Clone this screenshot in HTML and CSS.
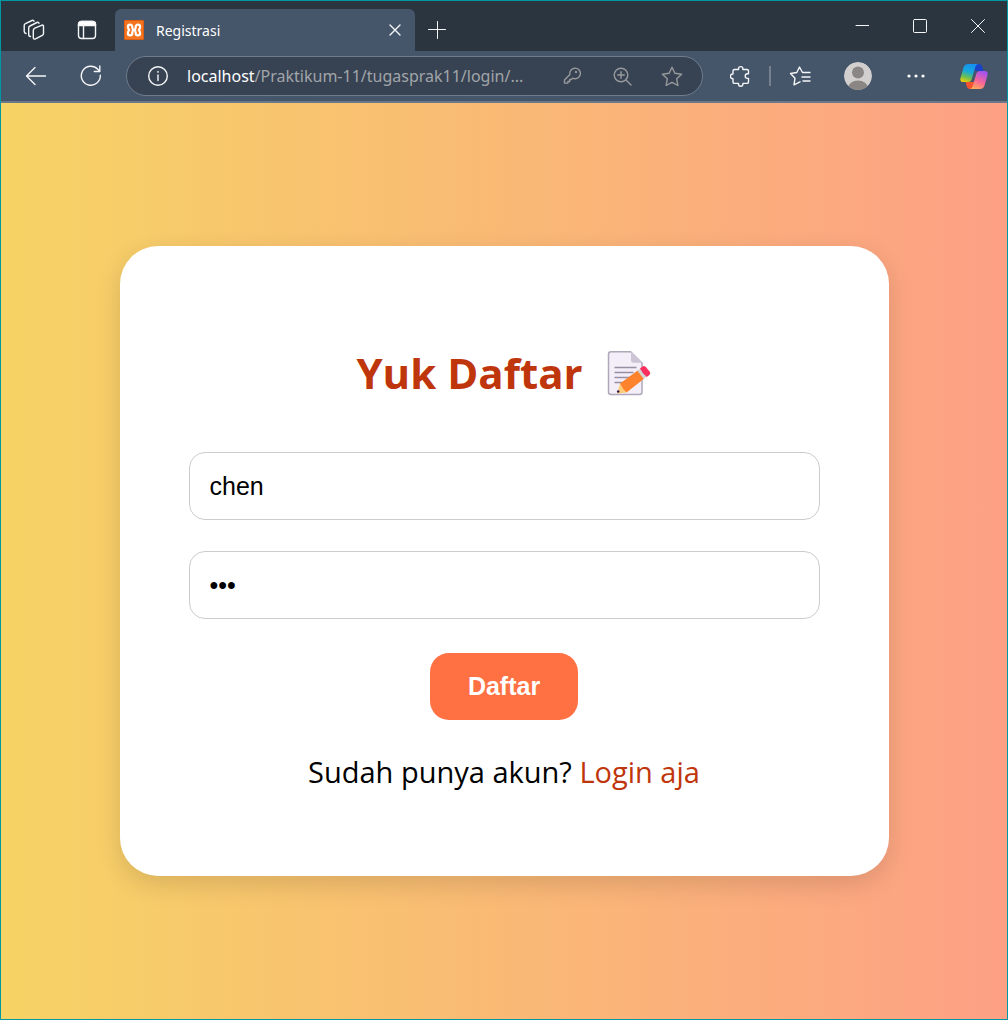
FILE: index.html
```html
<!DOCTYPE html>
<html lang="id">
<head>
<meta charset="utf-8">
<meta name="viewport" content="width=device-width, initial-scale=1">
<title>Registrasi</title>
<link rel="stylesheet" href="styles.css">
</head>
<body>
<div class="window">
  <header class="titlebar">
    <div class="tabs">
      <button class="tab-tool" aria-label="Workspaces">
        <svg width="22" height="22" viewBox="0 0 22 22" class="line"><path d="M11.800 9.200 18.500 6.300Q20.500 5.500 20.500 7.500v7q0 1.300-1.200 1.800l-6.800 3.500Q10.300 20.800 10.300 18.500V11.500Q10.300 9.900 11.800 9.200z"/><path d="M7.500 17.500Q5.700 17.500 5.700 15.500V8.800q0-1.300 1.200-1.800L14 3.500q1.500-.6 2 .8"/><path d="M3 14.500Q1.200 14 1.200 12.500V6.500q0-1.300 1.200-1.800L9 1.500q1.500-.6 2 .8"/></svg>
      </button>
      <button class="tab-tool" aria-label="Tab actions">
        <svg width="20" height="20" viewBox="0 0 20 20" class="line"><rect x="1.500" y="1.500" width="17" height="17" rx="3"/><path d="M1.500 5.500V4.500a3 3 0 0 1 3-3h11a3 3 0 0 1 3 3v1z" fill="#fff"/><path d="M6.500 6v12.500"/></svg>
      </button>
      <div class="tab">
        <svg class="favicon" width="20" height="20" viewBox="0 0 20 20"><rect width="20" height="20" rx="1" fill="#dd5f14"/><rect x="1" y="1" width="18" height="18" fill="#f5741f"/><path d="M8.300 7.500V6.800a2.200 2.200 0 0 0-4.400 0q0 1.700 1.300 3.200-1.300 1.500-1.300 3.200a2.200 2.200 0 0 0 4.400 0v-.5Q8.300 10.500 10 10t1.700-2.500V6.800a2.200 2.200 0 0 1 4.400 0q0 1.700-1.300 3.200 1.300 1.500 1.300 3.200a2.200 2.200 0 0 1-4.400 0v-.5Q11.700 10.500 10 10T8.300 7.500" fill="none" stroke="#fff" stroke-width="2.200" stroke-linecap="round" stroke-linejoin="round"/></svg>
        <span class="tab-title">Registrasi</span>
        <button class="tab-close" aria-label="Close tab">
          <svg width="12" height="12" viewBox="0 0 12 12" class="line"><path d="m1 1 10 10M11 1 1 11"/></svg>
        </button>
      </div>
      <button class="new-tab" aria-label="New tab">
        <svg width="18" height="18" viewBox="0 0 18 18" class="line thin"><path d="M9.500 .5v17M.5 8.500h17"/></svg>
      </button>
    </div>
    <div class="controls">
      <button class="control" aria-label="Minimize"><svg width="14" height="14" viewBox="0 0 14 14" class="line thin"><path d="M1 6.500h13"/></svg></button>
      <button class="control" aria-label="Maximize"><svg width="14" height="14" viewBox="0 0 14 14" class="line thin"><rect x=".5" y=".5" width="13" height="13" rx="1"/></svg></button>
      <button class="control" aria-label="Close"><svg width="14" height="14" viewBox="0 0 14 14" class="line thin"><path d="m.5.5 13 13M13.500.5l-13 13"/></svg></button>
    </div>
  </header>

  <nav class="toolbar" aria-label="Browser">
    <button class="nav-button" aria-label="Back"><svg width="22" height="20" viewBox="0 0 22 20" class="line"><path d="M20.500 10H1.500M10 1.500 1.500 10l8.500 8.500"/></svg></button>
    <button class="nav-button" aria-label="Refresh"><svg width="22" height="22" viewBox="0 0 22 22" class="line"><path d="M20.300 10.200A9.500 9.500 0 1 1 17.800 4.300L19.800 6.500M19.800 1v5.500h-5.500"/></svg></button>
    <div class="address">
      <button class="address-icon" aria-label="Site information"><svg width="20" height="20" viewBox="0 0 20 20" class="line"><circle cx="10" cy="10" r="9.300"/><path d="M10 9v5.500M10 5.500v.8"/></svg></button>
      <div class="url"><span class="host">localhost</span>/Praktikum-11/tugasprak11/login/...</div>
      <button class="address-icon" aria-label="Passwords"><svg width="18" height="18" viewBox="0 0 18 18" class="line muted"><path d="M11.500 1.200a5.300 5.300 0 1 1-1.800 10L8.300 12.500H6.700v2H4.900v1.600H1.500v-3.200L6.900 7.600A5.300 5.300 0 0 1 11.500 1.200z"/><circle cx="13" cy="5" r=".5"/></svg></button>
      <button class="address-icon" aria-label="Zoom"><svg width="19" height="19" viewBox="0 0 19 19" class="line muted"><circle cx="8" cy="8" r="6.800"/><path d="m13 13 5 5M8 4.700v6.600M4.700 8h6.600"/></svg></button>
      <button class="address-icon" aria-label="Add to favorites"><svg width="22" height="21" viewBox="0 0 22 21" class="line muted"><path d="m11 1.200 2.900 6.100 6.700.9-4.900 4.600 1.200 6.700L11 16.300l-5.900 3.200 1.200-6.700-4.900-4.600 6.700-.9z"/></svg></button>
    </div>
    <button class="tool" aria-label="Extensions"><svg width="20" height="22" viewBox="0 0 20 22" class="line"><path d="M4.500 4.500h4V3.800a2.200 2.200 0 0 1 4.400 0v.7h4q1.600 0 1.600 1.500v2.800h-1a2.300 2.300 0 0 0 0 4.600h1v3.500q0 1.500-1.600 1.500h-4v.700a2.200 2.200 0 0 1-4.400 0v-.7h-4q-1.500 0-1.500-1.500v-3.300h-.3a2.300 2.300 0 0 1 0-4.600H3V6q0-1.500 1.500-1.500z"/></svg></button>
    <span class="divider"></span>
    <button class="tool" aria-label="Favorites"><svg width="22" height="20" viewBox="0 0 22 20" class="line"><path d="M13.500 6.500 10.500 1 7.800 6.500 1.500 7.500l4.500 4.700L5 18.800l6-3M13.500 6.500H21M13 11h8M14 15h7"/></svg></button>
    <button class="tool" aria-label="Profile"><svg width="28" height="28" viewBox="0 0 28 28"><defs><clipPath id="face"><circle cx="14" cy="14" r="14"/></clipPath></defs><g clip-path="url(#face)"><circle cx="14" cy="14" r="14" fill="#d2d0ce"/><circle cx="14" cy="10.500" r="6" fill="#8a8683"/><ellipse cx="14" cy="26" rx="10" ry="7.500" fill="#8a8683"/></g></svg></button>
    <button class="tool" aria-label="Settings and more"><svg width="18" height="4" viewBox="0 0 18 4" fill="#fff"><circle cx="2" cy="2" r="1.600"/><circle cx="9" cy="2" r="1.600"/><circle cx="16" cy="2" r="1.600"/></svg></button>
    <button class="tool" aria-label="Copilot">
      <svg width="28" height="27" viewBox="0 0 28 27">
        <defs>
          <linearGradient id="cool" x1=".5" y1="0" x2=".2" y2="1"><stop offset="0" stop-color="#1591f0"/><stop offset=".4" stop-color="#17a9dc"/><stop offset=".7" stop-color="#65bf58"/><stop offset="1" stop-color="#f4cf05"/></linearGradient>
          <linearGradient id="warm" x1=".7" y1="0" x2=".3" y2="1"><stop offset="0" stop-color="#a052f4"/><stop offset=".55" stop-color="#f5659b"/><stop offset="1" stop-color="#ffa85b"/></linearGradient>
        </defs>
        <path d="M15 1h4q2.500 0 3.200 2.500L23.500 8H15z" fill="#1b43c8"/>
        <path d="M13 26H9.500Q7.500 26 6.800 23.500L5.500 19H15z" fill="#f4522e"/>
        <path d="M8 1h10q-2 .5-2.700 3L11.800 16q-1 3-3.800 3H3.500Q-.5 19 .5 15L3.500 4.500Q4.600 1 8 1z" fill="url(#cool)"/>
        <path d="M20 26H10q2-.5 2.700-3l3.500-12q1-3 3.800-3h4.500q4 0 3 4l-3 10.500Q23.400 26 20 26z" fill="url(#warm)"/>
      </svg>
    </button>
  </nav>

  <main class="page">
    <section class="card">
      <h1 class="heading">Yuk Daftar
        <svg class="memo" width="46" height="46" viewBox="0 0 46 46" role="img" aria-label="Memo">
          <path d="M5 1.700h19.500L36 13v29q0 2.500-2.500 2.500H5Q2.500 44.500 2.500 42V4.200Q2.500 1.700 5 1.700z" fill="#f3eef8" stroke="#afa8ba" stroke-width="1.500"/>
          <path d="M25 1.500 36.300 12.800H27.500Q25 12.800 25 10.500z" fill="#cdc4d6"/>
          <path d="M8.500 17.500h22M8.500 22.500h19M8.500 27.500h16M8.500 32.500h9" stroke="#998ea4" stroke-width="1.500"/>
          <path d="m14 33.500 6.500 9-8 1q-1.500 0-1-1.500z" fill="#ffce7c"/>
          <circle cx="12.200" cy="41.500" r="1.300" fill="#321b41"/>
          <path d="M14 33.500 32 20.200l6 8.600L20.500 42.500q-3.500-3-6.500-9z" fill="#ff822d"/>
          <path d="m31.500 20.700 3.500-2.700 6 8.500-3.200 2.500z" fill="#d3d3d3"/>
          <path d="m34 18.500 2.200-1.800q2-1.300 3.600.3l4 4.700q1.100 1.800-.4 3.200L40.700 27q-4-3-6.700-8.500z" fill="#f92f60"/>
        </svg>
      </h1>
      <form class="form">
        <input class="field" type="text" name="username" aria-label="Username" value="chen">
        <input class="field" type="password" name="password" aria-label="Password" value="123">
        <button class="submit" type="submit">Daftar</button>
      </form>
      <p class="login">Sudah punya akun? <a class="link" href="#login">Login aja</a></p>
    </section>
  </main>
</div>
</body>
</html>
```

FILE: styles.css
```css
* {
  box-sizing: border-box;
}

body {
  margin: 0;
  font-family: "Open Sans", "Noto Sans", sans-serif;
}

button {
  display: flex;
  align-items: center;
  justify-content: center;
  padding: 0;
  border: 0;
  background: none;
  color: inherit;
}

svg {
  flex: none;
}

.window {
  display: flex;
  flex-direction: column;
  min-height: 100vh;
  border: 1px solid #0099a3;
}

.line {
  fill: none;
  stroke: #f4f6f8;
  stroke-width: 1.4;
  stroke-linecap: round;
  stroke-linejoin: round;
}

.thin {
  stroke-width: 1;
}

.muted {
  stroke: #989a9c;
}

/* Title bar */
.titlebar {
  display: flex;
  justify-content: space-between;
  height: 50px;
  background: #2b3540;
}

.tabs {
  display: flex;
  padding: 8px 0 0 6px;
}

.tab-tool {
  width: 53px;
}

.tab {
  display: flex;
  align-items: center;
  gap: 12px;
  width: 300px;
  margin-left: 2px;
  padding: 0 8px 0 9px;
  border-radius: 6px 6px 0 0;
  background: #45556a;
  color: #fff;
}

.tab-title {
  flex: 1;
  font-family: "Noto Sans", sans-serif;
  font-size: 14px;
}

.tab-close {
  width: 24px;
  height: 24px;
}

.new-tab {
  width: 44px;
}

.controls {
  display: flex;
}

.control {
  width: 58px;
}

/* Toolbar */
.toolbar {
  display: flex;
  align-items: center;
  height: 52px;
  padding: 0 4px 0 7px;
  border-bottom: 2px solid #6a788a;
  background: #45556a;
}

.nav-button {
  width: 55px;
  height: 40px;
}

.address {
  display: flex;
  flex: 1;
  align-items: center;
  min-width: 0;
  height: 40px;
  margin: 0 8px;
  padding: 0 5px 0 6px;
  border: 1px solid #6f7c8c;
  border-radius: 20px;
  background: #374353;
}

.address-icon {
  flex: none;
  width: 50px;
  height: 38px;
}

.url {
  flex: 1;
  min-width: 0;
  margin-left: 4px;
  overflow: hidden;
  font-family: "Noto Sans", sans-serif;
  font-size: 16px;
  white-space: nowrap;
  color: #a2a5a9;
}

.host {
  color: #fff;
}

.tool {
  width: 58px;
  height: 40px;
}

.divider {
  width: 2px;
  height: 20px;
  background: #77808d;
}

/* Registration page */
.page {
  display: flex;
  flex: 1;
  align-items: center;
  justify-content: center;
  background: linear-gradient(to right, #f6d365, #fda085);
}

.card {
  display: flex;
  flex-direction: column;
  align-items: center;
  width: 100%;
  max-width: 769px;
  padding: 97px 69px 84px;
  border-radius: 38px;
  background: #fff;
  box-shadow: 0 8px 26px rgba(0, 0, 0, 0.13);
}

.heading {
  display: flex;
  align-items: center;
  gap: 23px;
  margin: 0 0 49px;
  font-size: 42px;
  line-height: 60px;
  color: #bf360c;
}

.form {
  display: flex;
  flex-direction: column;
  align-items: center;
  width: 100%;
}

.field {
  width: 100%;
  height: 68px;
  margin: 0 0 31px;
  padding: 0 20px;
  border: 1px solid #ccc;
  border-radius: 16px;
  background: #fff;
  font-family: "Liberation Sans", Arial, sans-serif;
  font-size: 25px;
  color: #000;
}

.submit {
  height: 67px;
  margin-top: 3px;
  padding: 0 38px;
  border-radius: 19px;
  background: #ff7043;
  font-family: "Liberation Sans", Arial, sans-serif;
  font-size: 25px;
  font-weight: bold;
  color: #fff;
}

.login {
  margin: 32px 0 0;
  font-size: 29px;
  line-height: 40px;
  color: #000;
}

.link {
  color: #bf360c;
  text-decoration: none;
}
```
